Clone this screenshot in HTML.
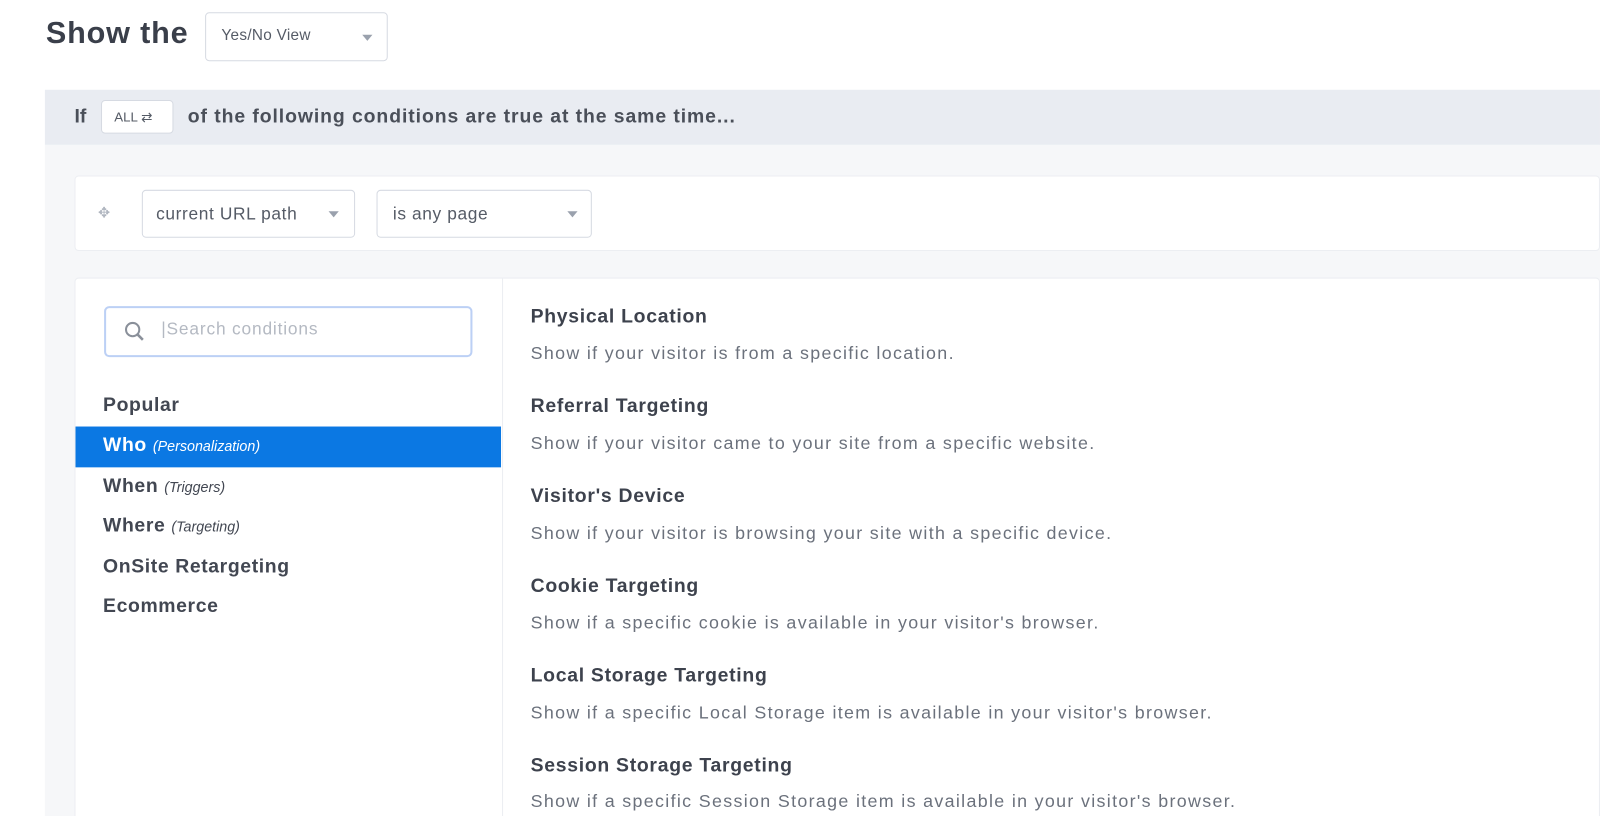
<!DOCTYPE html>
<html><head><style>
body{margin:0;width:1600px;height:814px;overflow:hidden;background:#fff;font-family:"Liberation Sans",sans-serif;color:#3d424d}
#w{position:absolute;left:0;top:0;width:1568px;height:800px;overflow:hidden;transform:scale(1.0204);transform-origin:0 0}
.a{position:absolute}
.sel{position:absolute;border:1px solid #d6dae2;border-radius:4px;background:#fff;box-sizing:border-box;color:#555b66}
.caret{position:absolute;width:0;height:0;border-left:5px solid transparent;border-right:5px solid transparent;border-top:6px solid #9aa1ad}
.t{position:absolute;left:520px;font-size:19px;font-weight:bold;color:#3d424d;letter-spacing:0.7px}
.d{position:absolute;left:520px;font-size:17.5px;color:#6b717c;letter-spacing:1.3px}
.li{position:absolute;left:101px;font-size:19px;font-weight:bold;color:#424752;letter-spacing:0.6px}
.li i{font-size:14px;font-weight:normal;letter-spacing:0}
</style></head><body><div id="w">
<div class="a" style="left:45px;top:16px;font-size:30px;font-weight:bold;color:#3a3f4a;letter-spacing:0.8px">Show the</div>
<div class="sel" style="left:201px;top:12px;width:179px;height:48px"><span class="a" style="left:15px;top:13px;font-size:15px;letter-spacing:0.3px">Yes/No View</span><div class="caret" style="left:153px;top:21px"></div></div>
<div class="a" style="left:44px;top:88px;width:1524px;height:54px;background:#e9ecf2"></div>
<div class="a" style="left:44px;top:142px;width:1524px;height:672px;background:#f6f7f9"></div>
<div class="a" style="left:73px;top:104px;font-size:19px;font-weight:bold;color:#4a4f59">If</div>
<div class="sel" style="left:99px;top:98px;width:71px;height:33px"><span class="a" style="left:12px;top:8px;font-size:13px">ALL ⇄</span></div>
<div class="a" style="left:184px;top:104px;font-size:19px;font-weight:bold;color:#4a4f59;letter-spacing:0.9px">of the following conditions are true at the same time...</div>
<div class="a" style="left:73px;top:172px;width:1495px;height:74px;background:#fff;border:1px solid #eceef2;border-radius:4px;box-sizing:border-box"></div>
<div class="a" style="left:96px;top:200px;color:#b0b6c0;font-size:14px">✥</div>
<div class="sel" style="left:139px;top:186px;width:209px;height:47px"><span class="a" style="left:13px;top:13px;font-size:17px;letter-spacing:0.6px">current URL path</span><div class="caret" style="left:182px;top:20px"></div></div>
<div class="sel" style="left:369px;top:186px;width:211px;height:47px"><span class="a" style="left:15px;top:13px;font-size:17px;letter-spacing:0.6px">is any page</span><div class="caret" style="left:186px;top:20px"></div></div>
<div class="a" style="left:73px;top:272px;width:1495px;height:560px;background:#fff;border:1px solid #eceef2;border-radius:4px;box-sizing:border-box"></div>
<div class="a" style="left:492px;top:272px;width:1px;height:542px;background:#eceef2"></div>
<div class="a" style="left:102px;top:300px;width:361px;height:50px;border:2px solid #bcd0f5;border-radius:5px;box-sizing:border-box"></div>
<svg class="a" style="left:121px;top:314px" width="22" height="22" viewBox="0 0 22 22"><circle cx="9" cy="9" r="6.5" fill="none" stroke="#8a909a" stroke-width="2"/><path d="M14 14l5 5" stroke="#8a909a" stroke-width="2.5"/></svg>
<div class="a" style="left:158px;top:313px;font-size:17px;color:#b4b9c2;letter-spacing:0.8px">|Search conditions</div>
<div class="li" style="top:387px">Popular</div>
<div class="a" style="left:74px;top:418px;width:417px;height:40px;background:#0b78e3"></div>
<div class="li" style="top:426px;color:#fff">Who <i>(Personalization)</i></div>
<div class="li" style="top:466px">When <i>(Triggers)</i></div>
<div class="li" style="top:505px">Where <i>(Targeting)</i></div>
<div class="li" style="top:545px">OnSite Retargeting</div>
<div class="li" style="top:584px">Ecommerce</div>
<div class="t" style="top:300px">Physical Location</div><div class="d" style="top:336px">Show if your visitor is from a specific location.</div>
<div class="t" style="top:388px">Referral Targeting</div><div class="d" style="top:424px">Show if your visitor came to your site from a specific website.</div>
<div class="t" style="top:476px">Visitor's Device</div><div class="d" style="top:512px">Show if your visitor is browsing your site with a specific device.</div>
<div class="t" style="top:564px">Cookie Targeting</div><div class="d" style="top:600px">Show if a specific cookie is available in your visitor's browser.</div>
<div class="t" style="top:652px">Local Storage Targeting</div><div class="d" style="top:688px">Show if a specific Local Storage item is available in your visitor's browser.</div>
<div class="t" style="top:740px">Session Storage Targeting</div><div class="d" style="top:775px">Show if a specific Session Storage item is available in your visitor's browser.</div>
</div></body></html>
